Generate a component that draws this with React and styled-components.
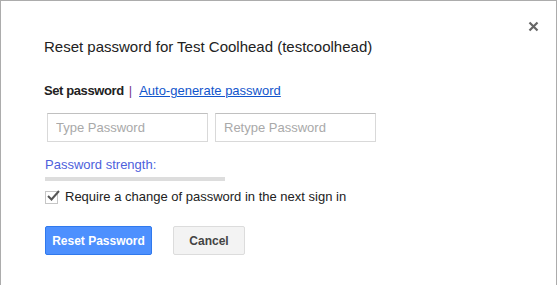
import React from "react";
import styled, { createGlobalStyle } from "styled-components";

const GlobalStyle = createGlobalStyle`
  body {
    margin: 0;
    background: #fff;
    font-family: Arial, "Liberation Sans", sans-serif;
  }
`;

const Dialog = styled.div`
  position: relative;
  box-sizing: border-box;
  width: 557px;
  height: 285px;
  overflow: hidden;
  border: 1px solid #acacac;
  border-bottom: none;
  background: #fff;
  padding: 34px 0 0 43px;
`;

const Close = styled.button`
  position: absolute;
  top: 17px;
  right: 15px;
  width: 16px;
  height: 16px;
  padding: 0;
  border: none;
  background: none;
  cursor: pointer;
  display: flex;
  align-items: center;
  justify-content: center;
`;

const Title = styled.h2`
  margin: 0;
  font-size: 15px;
  font-weight: normal;
  line-height: 24px;
  color: #222;
`;

const Tabs = styled.div`
  margin-top: 24px;
  font-size: 13px;
  line-height: 16px;
  color: #222;
  display: flex;
  align-items: center;
`;

const Current = styled.span`
  font-weight: bold;
  letter-spacing: -0.4px;
`;

const Sep = styled.span`
  color: #7c3b8c;
  margin: 0 7px 0 5px;
`;

const TabLink = styled.a`
  color: #1155cc;
  text-decoration: underline;
  cursor: pointer;
`;

const Inputs = styled.div`
  display: flex;
  gap: 7px;
  margin-top: 14px;
  margin-left: 3px;
`;

const Field = styled.input`
  box-sizing: border-box;
  width: 161px;
  height: 29px;
  border: 1px solid #d9d9d9;
  border-top-color: #c0c0c0;
  padding: 0 8px;
  font-family: Arial, "Liberation Sans", sans-serif;
  font-size: 13px;
  color: #222;
  outline: none;
  &::placeholder {
    color: #a9a9a9;
  }
`;

const Strength = styled.div`
  margin-top: 15px;
  margin-left: 1px;
  font-size: 13px;
  line-height: 16px;
  color: #4d5fdc;
`;

const Bar = styled.div`
  margin-top: 4px;
  margin-left: 1px;
  width: 180px;
  height: 4px;
  background: #dddddd;
`;

const CheckRow = styled.label`
  display: flex;
  align-items: center;
  margin-top: 8px;
  margin-left: 1px;
  font-size: 13px;
  line-height: 16px;
  color: #222;
  gap: 7px;
`;

const Box = styled.span`
  box-sizing: border-box;
  width: 13px;
  height: 13px;
  border: 1px solid #c6c6c6;
  position: relative;
  display: inline-block;
  flex-shrink: 0;
`;

const Buttons = styled.div`
  display: flex;
  gap: 21px;
  margin-top: 21px;
  margin-left: 1px;
`;

const Button = styled.button`
  box-sizing: border-box;
  height: 29px;
  padding: 0;
  width: ${(p) => (p.$primary ? "107px" : "72px")};
  border-radius: 2px;
  border: 1px solid ${(p) => (p.$primary ? "#3079ed" : "#dcdcdc")};
  background: ${(p) => (p.$primary ? "#4d90fe" : "#f3f3f3")};
  color: ${(p) => (p.$primary ? "#fff" : "#444")};
  font-family: Arial, "Liberation Sans", sans-serif;
  font-size: 12px;
  font-weight: bold;
  cursor: pointer;
`;

export default function App() {
  return (
    <>
      <GlobalStyle />
      <Dialog>
        <Close aria-label="Close">
          <svg width="11" height="11" viewBox="0 0 11 11">
            <path d="M1.5 1.5 L9.5 9.5 M9.5 1.5 L1.5 9.5" stroke="#666" strokeWidth="2.2" />
          </svg>
        </Close>
        <Title>Reset password for Test Coolhead (testcoolhead)</Title>
        <Tabs>
          <Current>Set password</Current>
          <Sep>|</Sep>
          <TabLink>Auto-generate password</TabLink>
        </Tabs>
        <Inputs>
          <Field type="password" placeholder="Type Password" />
          <Field type="password" placeholder="Retype Password" />
        </Inputs>
        <Strength>Password strength:</Strength>
        <Bar />
        <CheckRow>
          <Box>
            <svg
              width="15"
              height="13"
              viewBox="0 0 15 13"
              style={{ position: "absolute", left: 0, top: -3 }}
            >
              <path d="M2 7 L5.5 10.5 L13 2" fill="none" stroke="#555" strokeWidth="2" />
            </svg>
          </Box>
          Require a change of password in the next sign in
        </CheckRow>
        <Buttons>
          <Button $primary>Reset Password</Button>
          <Button>Cancel</Button>
        </Buttons>
      </Dialog>
    </>
  );
}
